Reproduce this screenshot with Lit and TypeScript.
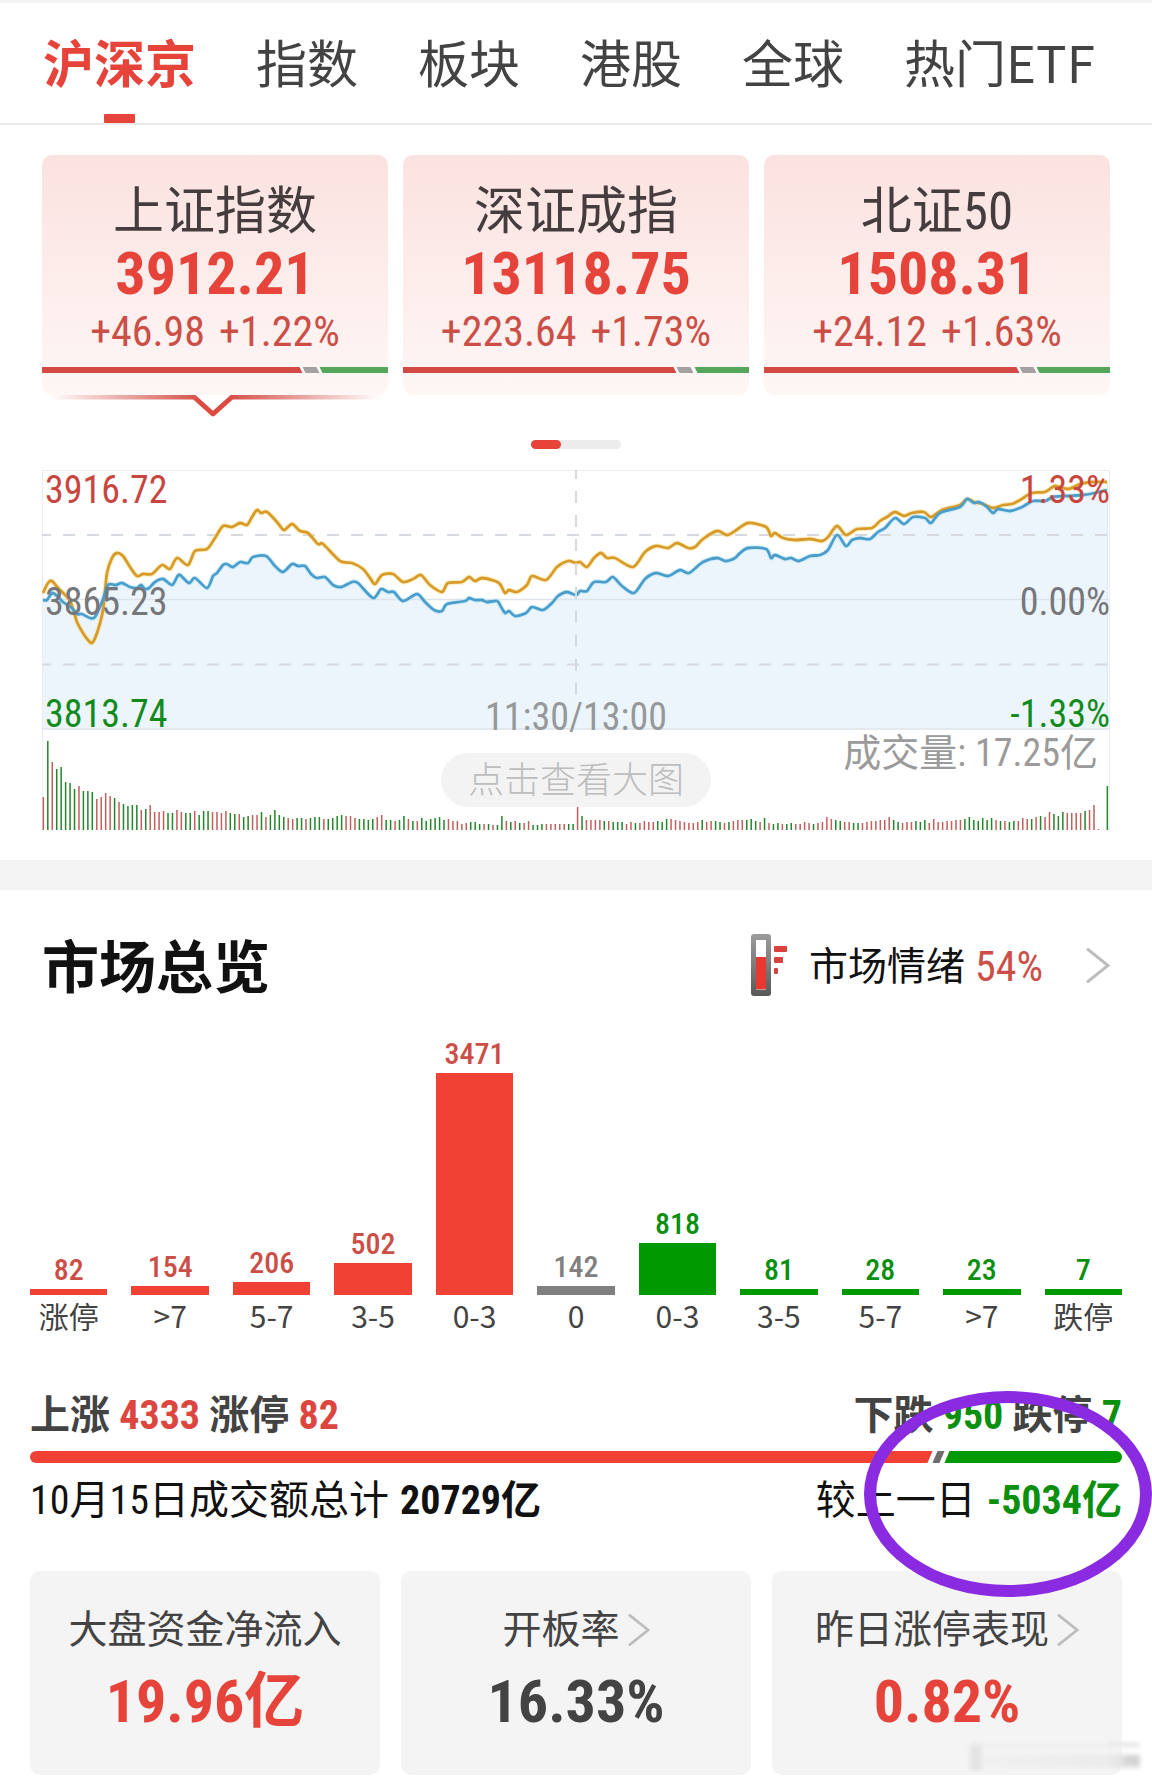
import { LitElement, html, svg, css, nothing } from "lit";
import { customElement, property, state } from "lit/decorators.js";
import { classMap } from "lit/directives/class-map.js";
import { styleMap } from "lit/directives/style-map.js";

interface IndexQuote {
  name: string;
  value: string;
  change: string;
  percent: string;
  up: number;
  flat: number;
  down: number;
}

interface Bucket {
  label: string;
  count: number;
  height: number;
  tone: "up" | "flat" | "down";
}

const TABS = ["沪深京", "指数", "板块", "港股", "全球", "热门ETF"];

const QUOTES: IndexQuote[] = [
  { name: "上证指数", value: "3912.21", change: "+46.98", percent: "+1.22%", up: 257, flat: 14, down: 69 },
  { name: "深证成指", value: "13118.75", change: "+223.64", percent: "+1.73%", up: 270, flat: 14, down: 56 },
  { name: "北证50", value: "1508.31", change: "+24.12", percent: "+1.63%", up: 252, flat: 14, down: 74 },
];

const BUCKETS: Bucket[] = [
  { label: "涨停", count: 82, height: 6, tone: "up" },
  { label: ">7", count: 154, height: 9, tone: "up" },
  { label: "5-7", count: 206, height: 13, tone: "up" },
  { label: "3-5", count: 502, height: 32, tone: "up" },
  { label: "0-3", count: 3471, height: 222, tone: "up" },
  { label: "0", count: 142, height: 9, tone: "flat" },
  { label: "0-3", count: 818, height: 52, tone: "down" },
  { label: "3-5", count: 81, height: 6, tone: "down" },
  { label: "5-7", count: 28, height: 6, tone: "down" },
  { label: ">7", count: 23, height: 6, tone: "down" },
  { label: "跌停", count: 7, height: 6, tone: "down" },
];

const PRICE_LINE =
  "43,600 47,600 53,593 63,602 72,608 77,614 82,614 90,618 95,617 102,602 108,585 116,585 122,583 130,587 137,588 141,585 145,589 149,588 155,582 163,579 172,585 177,577 180,575 189,583 195,578 207,588 213,576 217,573 223,565 227,564 233,567 240,562 248,563 253,557 266,556 275,566 283,572 292,564 298,566 305,566 311,574 317,578 325,577 333,585 341,587 352,582 358,583 373,598 381,589 388,592 394,592 403,601 417,594 425,602 434,610 442,611 447,604 465,601 469,598 475,600 482,600 487,602 497,601 500,605 505,613 509,611 515,616 526,613 532,607 543,610 552,603 558,596 567,592 576,595 580,591 587,591 594,582 606,582 613,577 622,586 634,593 645,579 656,573 668,576 680,570 689,573 703,562 717,558 726,561 735,558 739,554 748,548 766,549 771,558 775,555 785,559 791,558 799,561 810,556 820,555 828,550 837,535 846,546 852,540 860,538 870,539 878,532 885,528 895,518 904,524 913,517 925,518 931,523 940,513 960,507 967,499 974,503 979,502 987,507 993,513 998,509 1010,511 1022,507 1033,501 1045,501 1053,497 1065,496 1083,495 1090,494 1107,490";

const LEAD_LINE =
  "43,593 48,583 52,581 58,588 70,601 77,622 83,633 88,640 92,643 97,633 103,610 107,573 112,558 117,553 123,556 130,567 137,576 143,574 152,574 162,565 170,569 177,558 188,565 195,551 207,549 215,538 223,526 232,527 240,523 247,525 252,517 257,510 261,513 267,512 277,522 284,530 292,524 300,531 308,533 318,544 323,544 340,561 352,563 363,569 370,578 375,584 382,575 393,574 403,582 413,579 421,575 430,585 442,592 448,583 462,582 469,577 475,581 482,578 495,581 500,584 505,593 509,590 517,592 527,585 532,576 546,580 557,567 568,561 576,563 580,562 587,567 594,558 601,553 607,558 615,558 633,567 645,552 656,546 668,548 677,543 688,548 695,547 703,539 717,531 727,535 735,531 748,523 766,527 771,536 775,533 783,538 795,540 810,539 822,541 828,537 837,526 846,535 857,529 872,528 880,521 887,517 895,512 904,516 912,513 924,512 931,517 942,510 960,505 967,499 974,502 983,504 993,508 1003,505 1012,504 1020,500 1032,493 1045,492 1055,486 1068,489 1080,484 1092,482 1107,482";

/* Smooth curve through every point of a "x,y x,y" list. */
function smooth(points: string): string {
  const p = points.split(" ").map((pair) => pair.split(",").map(Number));
  const at = (i: number) => p[Math.max(0, Math.min(p.length - 1, i))];
  let d = `M${p[0][0]} ${p[0][1]}`;
  for (let i = 0; i < p.length - 1; i++) {
    const [a, b, c, e] = [at(i - 1), at(i), at(i + 1), at(i + 2)];
    const c1 = [b[0] + (c[0] - a[0]) / 7, b[1] + (c[1] - a[1]) / 7];
    const c2 = [c[0] - (e[0] - b[0]) / 7, c[1] - (e[1] - b[1]) / 7];
    d += ` C${c1.map((n) => n.toFixed(1)).join(" ")} ${c2.map((n) => n.toFixed(1)).join(" ")} ${c[0]} ${c[1]}`;
  }
  return d;
}

const PRICE_PATH = smooth(PRICE_LINE);
const LEAD_PATH = smooth(LEAD_LINE);

/* One entry per minute: bar height and direction. */
const VOLUME = (
  "33r 89g 68r 61g 63g 48g 47g 41g 44r 39g 39g 38g 31r 33r 37r 34r 32g 28r 26g 24g 25g 25g 20r 21g 25r 18r 18r 19r 17g 17g " +
  "20r 18r 17g 17g 19r 15g 19g 19g 18r 18r 17r 19r 17g 16g 16r 13g 14g 15r 15r 18g 13r 15g 20g 15g 13g 12r 11r 12g 12g 11r " +
  "12g 13g 13g 11r 11g 12g 14g 15g 14r 14r 12r 11g 11g 10g 11g 13r 15r 10g 10g 9r 10g 14g 11r 9g 9r 12g 9g 11g 12g 13g " +
  "10g 11r 9r 9r 6r 7r 8g 8g 6g 6r 6g 5r 5g 14g 9r 8g 9r 7g 7r 9r 5g 5g 6g 6r 6r 6r 6r 6r 6g " +
  "6g 23r 14g 10r 10r 10r 10r 9g 9r 8g 8g 8g 6r 8r 7g 7r 9r 8r 8r 9g 8g 11g 11r 10r 9r 8r 7r 7r 8r 10g " +
  "8r 9r 9g 8g 7r 8g 9r 10r 10r 10g 11g 9g 8r 12g 7r 6g 7g 6r 6g 7g 6r 6r 8r 7r 6g 7r 8r 13r 11r 10g " +
  "9g 8r 8r 7g 7g 7r 8r 9r 9r 10r 10r 13r 10g 8g 7r 8r 8r 9g 8g 10g 7r 11r 8r 8r 9r 9r 10r 10r 11g 13g 10g " +
  "9g 12g 10g 12g 10r 9g 9r 8g 9g 9r 12r 11r 11g 13r 14g 13r 18r 16g 14g 18g 17r 17r 17r 17r 19g 20r 25r 1r 0r 44g"
)
  .split(" ")
  .map((entry) => ({ height: parseInt(entry, 10), rising: entry.endsWith("r") }));

const tokens = css`
  :host {
    --red: #e6433a;
    --red-soft: #cc4f47;
    --red-fill: #f04134;
    --green: #0a8f0e;
    --green-fill: #009a00;
    --ink: #434343;
    --black: #111;
    --panel: #f4f4f4;
    --cjk: "Noto Sans CJK SC", "Noto Sans", sans-serif;
    --num: "Roboto Condensed", "Noto Sans CJK SC", "Roboto", sans-serif;
  }
  * {
    box-sizing: border-box;
  }
  button {
    margin: 0;
    padding: 0;
    border: 0;
    background: none;
    color: inherit;
    font: inherit;
    cursor: pointer;
  }
  a {
    color: inherit;
    text-decoration: none;
  }
  h2,
  p {
    margin: 0;
  }
`;

const chevron = (width: number, height: number) => html`
  <svg width=${width} height=${height} viewBox="0 0 24 36" fill="none" aria-hidden="true">
    <path d="M2 2 L22 18 L2 34" stroke="#bdbdbd" stroke-width="3" stroke-linecap="round" />
  </svg>
`;

@customElement("market-tabs")
class MarketTabs extends LitElement {
  @state() private active = 0;

  static styles = [
    tokens,
    css`
      :host {
        display: block;
        border-top: 3px solid var(--panel);
        border-bottom: 2px solid #ebebeb;
      }
      .tabs {
        display: flex;
        gap: 60px;
        padding: 6px 43px 0;
        font-family: var(--cjk);
        font-size: 51px;
        line-height: 105px;
        color: var(--ink);
        white-space: nowrap;
      }
      .tab {
        display: grid;
        grid-template-rows: 105px 9px;
        justify-items: center;
      }
      .tab.active {
        color: var(--red);
        font-weight: 700;
      }
      .mark {
        width: 31px;
        background: var(--red);
        border-radius: 1px;
      }
    `,
  ];

  render() {
    return html`
      <nav class="tabs">
        ${TABS.map(
          (name, i) => html`
            <button
              class=${classMap({ tab: true, active: i === this.active })}
              @click=${() => (this.active = i)}
            >
              ${name}${i === this.active ? html`<span class="mark"></span>` : nothing}
            </button>
          `
        )}
      </nav>
    `;
  }
}

@customElement("index-cards")
class IndexCards extends LitElement {
  @state() private active = 0;

  static styles = [
    tokens,
    css`
      :host {
        display: block;
      }
      .cards {
        display: grid;
        grid-template-columns: repeat(3, 1fr);
        gap: 15px;
        min-height: 262px;
        align-items: start;
      }
      .slot {
        display: grid;
      }
      .card {
        display: flex;
        flex-direction: column;
        align-items: stretch;
        padding: 27px 0 22px;
        border-radius: 10px;
        background: linear-gradient(#fbe2e0, #fef7f6);
        font-family: var(--num);
        text-align: center;
        white-space: nowrap;
      }
      .name {
        font-size: 51px;
        line-height: 60px;
        color: #453d3d;
      }
      .value {
        font-size: 60px;
        line-height: 64px;
        font-weight: 700;
        color: var(--red);
      }
      .move {
        font-size: 42px;
        line-height: 52px;
        color: var(--red-soft);
        display: flex;
        justify-content: center;
        gap: 14px;
      }
      .ratio {
        display: flex;
        gap: 3px;
        height: 6px;
        margin-top: 9px;
        overflow: hidden;
        background: #fff;
      }
      .part {
        transform: skewX(26deg);
      }
      .rise {
        background: #d24a41;
        margin-left: -4px;
      }
      .still {
        background: #a5a1a3;
      }
      .fall {
        background: #55a65a;
        margin-right: -4px;
      }
      .pointer {
        display: block;
        width: 100%;
        height: 22px;
      }
      .pager {
        display: flex;
        width: 90px;
        height: 9px;
        margin: 23px auto 0;
        border-radius: 5px;
        background: #ececec;
      }
      .page {
        width: 30px;
        border-radius: 5px;
        background: var(--red);
      }
    `,
  ];

  private pointer() {
    return html`
      <svg class="pointer" viewBox="0 0 346 22" preserveAspectRatio="none" fill="none" aria-hidden="true">
        <defs>
          <linearGradient id="fade" gradientUnits="userSpaceOnUse" x1="0" y1="0" x2="346" y2="0">
            <stop offset="0.02" stop-color="#d24a41" stop-opacity="0" />
            <stop offset="0.43" stop-color="#d24a41" stop-opacity="0.9" />
            <stop offset="0.46" stop-color="#dc4a41" />
            <stop offset="0.54" stop-color="#dc4a41" />
            <stop offset="0.57" stop-color="#d24a41" stop-opacity="0.9" />
            <stop offset="0.98" stop-color="#d24a41" stop-opacity="0" />
          </linearGradient>
        </defs>
        <path d="M0 2 H152 L171 19 L190 2 H346" stroke="url(#fade)" stroke-width="5" stroke-linejoin="round" />
      </svg>
    `;
  }

  render() {
    return html`
      <div class="cards">
        ${QUOTES.map(
          (q, i) => html`
            <div class="slot">
              <button class="card" @click=${() => (this.active = i)}>
                <span class="name">${q.name}</span>
                <span class="value">${q.value}</span>
                <span class="move"><span>${q.change}</span><span>${q.percent}</span></span>
                <span class="ratio">
                  <span class="part rise" style=${styleMap({ flexGrow: q.up })}></span>
                  <span class="part still" style=${styleMap({ flexGrow: q.flat })}></span>
                  <span class="part fall" style=${styleMap({ flexGrow: q.down })}></span>
                </span>
              </button>
              ${i === this.active ? this.pointer() : nothing}
            </div>
          `
        )}
      </div>
      <div class="pager"><span class="page"></span></div>
    `;
  }
}

@customElement("intraday-chart")
class IntradayChart extends LitElement {
  static styles = [
    tokens,
    css`
      :host {
        display: block;
        position: relative;
        font-family: var(--num);
        font-size: 38px;
        line-height: 38px;
        white-space: nowrap;
      }
      .plot {
        display: block;
        width: 100%;
        height: 361px;
      }
      .axis {
        position: absolute;
        display: flex;
        justify-content: space-between;
        left: 3px;
        right: 0;
      }
      .high {
        top: 1px;
        color: #c8463f;
      }
      .base {
        top: 113px;
        color: #75777b;
      }
      .low {
        top: 225px;
        color: #128a1c;
      }
      .time {
        position: absolute;
        top: 228px;
        left: 0;
        right: 0;
        text-align: center;
        color: #96989c;
      }
      .volume {
        position: absolute;
        top: 264px;
        right: 12px;
        color: #9b9b9b;
      }
      .enlarge {
        position: absolute;
        top: 283px;
        left: 50%;
        width: 270px;
        margin-left: -135px;
        padding-bottom: 6px;
        border-radius: 27px;
        background: #f3f3f3;
        font-family: var(--cjk);
        font-weight: 300;
        font-size: 36px;
        line-height: 48px;
        color: #bdbdbd;
      }
    `,
  ];

  render() {
    const step = 1064 / (VOLUME.length - 1);
    return html`
      <svg class="plot" viewBox="42 470 1068 361" preserveAspectRatio="none" fill="none" aria-hidden="true">
        <path d="M42 470.5 H1109.5 V830 M42.5 470 V830" stroke="#ececee" />
        <path d="${PRICE_PATH} V729 H43 Z" fill="#edf5fc" />
        <path d="M42 599.5 H1109 M42 729 H1109" stroke="#dfe3ea" stroke-width="1.5" />
        <path d="M1107.5 482 V729" stroke="#dfe6ef" />
        <path d="M42 535 H1107 M42 664.5 H1107" stroke="#d5d9dd" stroke-width="2" stroke-dasharray="12 12" stroke-dashoffset="3" />
        <path d=${LEAD_PATH} stroke="#fbe08a" stroke-width="5" stroke-opacity="0.5" stroke-linejoin="round" />
        <path d=${PRICE_PATH} stroke="#b5e6fb" stroke-width="5" stroke-opacity="0.5" stroke-linejoin="round" />
        <path d=${LEAD_PATH} stroke="#d79b2c" stroke-width="2.8" stroke-linejoin="round" />
        <path d=${PRICE_PATH} stroke="#4b9dca" stroke-width="2.8" stroke-linejoin="round" />
        <path d="M576 470 V700" stroke="#d5d9dd" stroke-width="2" stroke-dasharray="12 12" stroke-dashoffset="3" />
        ${VOLUME.map(
          (v, i) => svg`<rect x=${42.6 + i * step} y=${830 - v.height} width="1.5" height=${v.height}
            fill=${v.rising ? "#c0605c" : "#24852b"} />`
        )}
      </svg>
      <div class="axis high"><span>3916.72</span><span>1.33%</span></div>
      <div class="axis base"><span>3865.23</span><span>0.00%</span></div>
      <div class="axis low"><span>3813.74</span><span>-1.33%</span></div>
      <div class="time">11:30/13:00</div>
      <div class="volume">成交量: 17.25亿</div>
      <button class="enlarge">点击查看大图</button>
    `;
  }
}

@customElement("breadth-bars")
class BreadthBars extends LitElement {
  static styles = [
    tokens,
    css`
      :host {
        display: grid;
        grid-template-columns: repeat(11, 1fr);
        gap: 24px;
        height: 331px;
        align-items: end;
      }
      .column {
        display: flex;
        flex-direction: column;
        text-align: center;
        white-space: nowrap;
      }
      .count {
        font-family: var(--num);
        font-size: 30px;
        line-height: 36px;
        margin-bottom: 1px;
        font-weight: 500;
      }
      .label {
        margin: 2px 0 3px;
        font-family: var(--cjk);
        font-size: 30px;
        line-height: 36px;
        color: var(--ink);
      }
      .up {
        color: var(--red-soft);
      }
      .flat {
        color: #808080;
      }
      .down {
        color: var(--green);
      }
      .bar {
        background: currentColor;
      }
      .bar.up {
        color: var(--red-fill);
      }
      .bar.down {
        color: var(--green-fill);
      }
    `,
  ];

  render() {
    return BUCKETS.map(
      (b) => html`
        <div class="column">
          <span class="count ${b.tone}">${b.count}</span>
          <span class="bar ${b.tone}" style=${styleMap({ height: `${b.height}px` })}></span>
          <span class="label">${b.label}</span>
        </div>
      `
    );
  }
}

@customElement("stat-card")
class StatCard extends LitElement {
  @property() label = "";
  @property() value = "";
  @property() tone = "up";
  @property({ type: Boolean }) link = false;

  static styles = [
    tokens,
    css`
      :host {
        display: block;
      }
      .card {
        display: flex;
        flex-direction: column;
        gap: 16px;
        padding: 35px 0 41px;
        border-radius: 10px;
        background: var(--panel);
        font-family: var(--num);
        text-align: center;
        white-space: nowrap;
      }
      .label {
        display: flex;
        align-items: center;
        justify-content: center;
        gap: 8px;
        font-size: 39px;
        line-height: 48px;
        color: var(--ink);
      }
      .value {
        font-size: 60px;
        line-height: 64px;
        font-weight: 700;
      }
      .up {
        color: var(--red);
      }
      .flat {
        color: var(--ink);
      }
    `,
  ];

  render() {
    const body = html`
      <span class="label">${this.label}${this.link ? chevron(22, 34) : nothing}</span>
      <span class="value ${this.tone}">${this.value}</span>
    `;
    return this.link ? html`<a class="card" href="#">${body}</a>` : html`<div class="card">${body}</div>`;
  }
}

@customElement("app-root")
class AppRoot extends LitElement {
  static styles = [
    tokens,
    css`
      :host {
        display: block;
        position: relative;
        background: #fff;
        overflow: hidden;
      }
      .indices {
        padding: 30px 42px 29px;
      }
      .chart {
        margin-top: 21px;
      }
      .overview {
        position: relative;
        border-top: 30px solid var(--panel);
        padding: 35px 30px 7px;
        font-family: var(--num);
      }
      .head {
        display: flex;
        align-items: center;
        justify-content: space-between;
        padding: 0 12px;
        height: 80px;
      }
      .title {
        padding-bottom: 4px;
        font-family: var(--cjk);
        font-size: 57px;
        line-height: 76px;
        font-weight: 700;
        color: var(--black);
      }
      .mood {
        display: flex;
        align-items: center;
        font-size: 39px;
        line-height: 48px;
        color: var(--black);
      }
      .mood-text {
        display: flex;
        gap: 10px;
        padding-top: 4px;
        margin: 0 43px 0 16px;
      }
      .mood-value {
        font-size: 42px;
        color: var(--red-soft);
      }
      .row {
        display: flex;
        justify-content: space-between;
        font-size: 40px;
        line-height: 48px;
        white-space: nowrap;
      }
      .counts {
        margin-top: 56px;
        font-weight: 700;
        color: var(--ink);
      }
      .totals {
        margin-top: 14px;
        color: var(--black);
      }
      .pair {
        display: flex;
        gap: 11px;
      }
      .up {
        color: #dc463e;
      }
      .down {
        color: var(--green);
      }
      .balance {
        display: flex;
        gap: 5px;
        height: 12px;
        margin-top: 11px;
        border-radius: 6px;
        overflow: hidden;
      }
      .share {
        transform: skewX(-23deg);
      }
      .share-up {
        flex-grow: 897;
        margin-left: -6px;
        background: var(--red-fill);
      }
      .share-flat {
        width: 7px;
        background: #6e6e70;
      }
      .share-down {
        flex-grow: 179;
        margin-right: -6px;
        background: var(--green-fill);
      }
      .stats {
        display: grid;
        grid-template-columns: repeat(3, 1fr);
        gap: 21px;
        margin-top: 46px;
      }
      .circle {
        position: absolute;
        right: 0;
        bottom: 185px;
        width: 288px;
        height: 206px;
        border: 12px solid #8a2be2;
        border-radius: 50%;
        pointer-events: none;
      }
      .smudge {
        position: absolute;
        right: 6px;
        bottom: 8px;
        pointer-events: none;
      }
    `,
  ];

  private gauge() {
    return html`
      <svg width="42" height="62" viewBox="0 0 42 62" aria-hidden="true">
        <defs>
          <linearGradient id="tube" x1="0" y1="0" x2="0" y2="1">
            <stop offset="0" stop-color="#9c9c9c" />
            <stop offset="0.5" stop-color="#7c7c7c" />
            <stop offset="1" stop-color="#585858" />
          </linearGradient>
        </defs>
        <rect width="20" height="62" rx="3" fill="url(#tube)" />
        <rect x="5" y="6" width="10" height="50" fill="#fff" />
        <rect x="5" y="23" width="10" height="32" fill="#e8382f" />
        <rect x="5" y="55" width="10" height="1" fill="#b9a4a2" />
        <rect x="23" y="12" width="13" height="6" rx="1" fill="#d9413a" />
        <rect x="23" y="23" width="9" height="6" rx="1" fill="#d9413a" />
        <rect x="23" y="34" width="4" height="6" rx="1" fill="#d9413a" />
      </svg>
    `;
  }

  private smudge() {
    return html`
      <svg class="smudge" width="190" height="34" viewBox="0 0 190 34" aria-hidden="true">
        <defs>
          <filter id="soft" x="-10%" y="-30%" width="120%" height="160%">
            <feGaussianBlur stdDeviation="2" />
          </filter>
          <linearGradient id="trail" x1="0" x2="1" y1="0" y2="0">
            <stop offset="0" stop-color="#f1f1f1" />
            <stop offset="0.8" stop-color="#ebebeb" />
            <stop offset="1" stop-color="#dadada" />
          </linearGradient>
        </defs>
        <g filter="url(#soft)">
          <rect x="14" y="4" width="12" height="27" fill="#e5e5e5" />
          <rect x="28" y="3" width="156" height="5" fill="#f0f0f0" />
          <rect x="28" y="14" width="156" height="14" fill="url(#trail)" />
          <rect x="150" y="2" width="34" height="4" fill="#e9e9e9" />
          <rect x="168" y="17" width="16" height="7" fill="#d2d2d2" />
        </g>
      </svg>
    `;
  }

  render() {
    return html`
      <market-tabs></market-tabs>
      <section class="indices">
        <index-cards></index-cards>
        <intraday-chart class="chart"></intraday-chart>
      </section>
      <section class="overview">
        <header class="head">
          <h2 class="title">市场总览</h2>
          <a class="mood" href="#">
            ${this.gauge()}
            <span class="mood-text"><span>市场情绪</span><span class="mood-value">54%</span></span>
            ${chevron(24, 37)}
          </a>
        </header>
        <breadth-bars></breadth-bars>
        <div class="row counts">
          <p>上涨 <span class="up">4333</span> 涨停 <span class="up">82</span></p>
          <p>下跌 <span class="down">950</span> 跌停 <span class="down">7</span></p>
        </div>
        <div class="balance">
          <span class="share share-up"></span>
          <span class="share share-flat"></span>
          <span class="share share-down"></span>
        </div>
        <div class="row totals">
          <p class="pair"><span>10月15日成交额总计</span><b>20729亿</b></p>
          <p class="pair"><span>较上一日</span><b class="down">-5034亿</b></p>
        </div>
        <div class="stats">
          <stat-card label="大盘资金净流入" value="19.96亿"></stat-card>
          <stat-card label="开板率" value="16.33%" tone="flat" link></stat-card>
          <stat-card label="昨日涨停表现" value="0.82%" link></stat-card>
        </div>
        <div class="circle"></div>
        ${this.smudge()}
      </section>
    `;
  }
}
